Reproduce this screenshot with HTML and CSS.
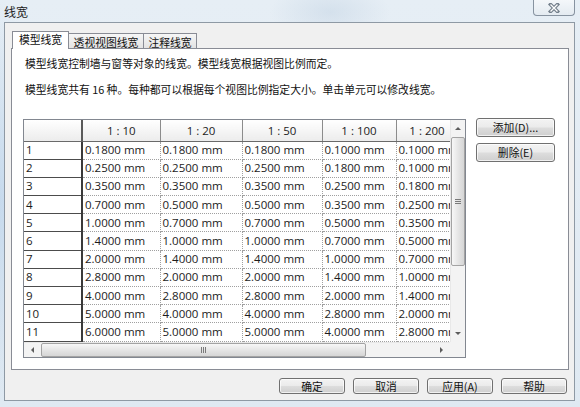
FILE: index.html
```html
<!DOCTYPE html>
<html lang="zh-CN">
<head>
    <meta charset="UTF-8">
    <title>线宽</title>
    <link rel="stylesheet" href="styles.css">
</head>
<body>
<div class="window">
    <div class="titlebar">
        <span class="title">线宽</span>
        <div class="close">
            <svg width="12" height="10" viewBox="0 0 12 10">
                <path d="M2.5 1.5 L9.5 8.5 M9.5 1.5 L2.5 8.5" stroke="#737f8b" stroke-width="3.6" stroke-linecap="square"/>
                <path d="M2.5 1.5 L9.5 8.5 M9.5 1.5 L2.5 8.5" stroke="#fdfdfd" stroke-width="1.3"/>
            </svg>
        </div>
    </div>

    <div class="client">
        <div class="tabs">
            <div class="tab active">模型线宽</div>
            <div class="tab tab-wide">透视视图线宽</div>
            <div class="tab tab-small">注释线宽</div>
        </div>

        <div class="page">
            <p class="note">模型线宽控制墙与窗等对象的线宽。模型线宽根据视图比例而定。</p>
            <p class="note second">模型线宽共有 16 种。每种都可以根据每个视图比例指定大小。单击单元可以修改线宽。</p>

            <div class="grid-row">
                <div class="grid">
                    <div class="grid-main">
                        <div class="viewport">
                            <table class="lw-table">
                                <colgroup>
                                    <col style="width:58px"><col style="width:78px"><col style="width:82px">
                                    <col style="width:80px"><col style="width:74px"><col style="width:62px">
                                </colgroup>
                                <tr><th class="corner-cell"></th><th>1 : 10</th><th>1 : 20</th><th>1 : 50</th><th>1 : 100</th><th>1 : 200</th></tr>
                                <tr><td class="rh">1</td><td>0.1800 mm</td><td>0.1800 mm</td><td>0.1800 mm</td><td>0.1000 mm</td><td>0.1000 mm</td></tr>
                                <tr><td class="rh">2</td><td>0.2500 mm</td><td>0.2500 mm</td><td>0.2500 mm</td><td>0.1800 mm</td><td>0.1000 mm</td></tr>
                                <tr><td class="rh">3</td><td>0.3500 mm</td><td>0.3500 mm</td><td>0.3500 mm</td><td>0.2500 mm</td><td>0.1800 mm</td></tr>
                                <tr><td class="rh">4</td><td>0.7000 mm</td><td>0.5000 mm</td><td>0.5000 mm</td><td>0.3500 mm</td><td>0.2500 mm</td></tr>
                                <tr><td class="rh">5</td><td>1.0000 mm</td><td>0.7000 mm</td><td>0.7000 mm</td><td>0.5000 mm</td><td>0.3500 mm</td></tr>
                                <tr><td class="rh">6</td><td>1.4000 mm</td><td>1.0000 mm</td><td>1.0000 mm</td><td>0.7000 mm</td><td>0.5000 mm</td></tr>
                                <tr><td class="rh">7</td><td>2.0000 mm</td><td>1.4000 mm</td><td>1.4000 mm</td><td>1.0000 mm</td><td>0.7000 mm</td></tr>
                                <tr><td class="rh">8</td><td>2.8000 mm</td><td>2.0000 mm</td><td>2.0000 mm</td><td>1.4000 mm</td><td>1.0000 mm</td></tr>
                                <tr><td class="rh">9</td><td>4.0000 mm</td><td>2.8000 mm</td><td>2.8000 mm</td><td>2.0000 mm</td><td>1.4000 mm</td></tr>
                                <tr><td class="rh">10</td><td>5.0000 mm</td><td>4.0000 mm</td><td>4.0000 mm</td><td>2.8000 mm</td><td>2.0000 mm</td></tr>
                                <tr><td class="rh">11</td><td>6.0000 mm</td><td>5.0000 mm</td><td>5.0000 mm</td><td>4.0000 mm</td><td>2.8000 mm</td></tr>
                                <tr><td class="rh">12</td><td>7.0000 mm</td><td>6.0000 mm</td><td>6.0000 mm</td><td>5.0000 mm</td><td>4.0000 mm</td></tr>
                            </table>
                        </div>
                        <div class="vscroll">
                            <div class="sb-btn"><span class="arrow-up"></span></div>
                            <div class="vthumb"><span class="grip-v"></span></div>
                            <div class="sb-space"></div>
                            <div class="sb-btn"><span class="arrow-down"></span></div>
                        </div>
                    </div>
                    <div class="hscroll-row">
                        <div class="hscroll">
                            <div class="sb-btn h"><span class="arrow-left"></span></div>
                            <div class="hthumb"><span class="grip-h"></span></div>
                            <div class="sb-space"></div>
                            <div class="sb-btn h"><span class="arrow-right"></span></div>
                        </div>
                        <div class="sb-corner"></div>
                    </div>
                </div>

                <div class="side-buttons">
                    <button class="btn side">添加(D)...</button>
                    <button class="btn side">删除(E)</button>
                </div>
            </div>
        </div>

        <div class="footer">
            <button class="btn foot">确定</button>
            <button class="btn foot">取消</button>
            <button class="btn foot">应用(A)</button>
            <button class="btn foot">帮助</button>
        </div>
    </div>
</div>
</body>
</html>
```

FILE: styles.css
```css
* {
    box-sizing: border-box;
}

body {
    margin: 0;
    font-family: "Noto Sans CJK SC", sans-serif;
    font-size: 10.8px;
    color: #111;
}

/* janela com moldura estilo aero */
.window {
    width: 580px;
    height: 407px;
    display: flex;
    flex-direction: column;
    overflow: hidden;
    background:
        radial-gradient(ellipse 60px 30px at 330px 12px, rgba(180, 200, 220, 0.35), transparent),
        radial-gradient(ellipse 40px 200px at 0px 200px, rgba(170, 200, 230, 0.5), transparent),
        linear-gradient(#e6eef5, #dfe9f2);
}

.titlebar {
    height: 22px;
    flex-shrink: 0;
    display: flex;
    justify-content: space-between;
    align-items: flex-start;
}

.title {
    font-size: 12px;
    line-height: 14px;
    padding: 5px 0 0 4px;
    color: #1b1b1b;
}

.close {
    width: 42px;
    height: 16px;
    margin-right: 5px;
    border: 1px solid #8793a0;
    border-top: none;
    border-radius: 0 0 4px 4px;
    background: linear-gradient(#f4f7fa, #e4ebf1);
    display: flex;
    align-items: center;
    justify-content: center;
}

.client {
    flex: 1;
    margin: 0 5px 6px 4px;
    border: 1px solid #8e99a4;
    background: #f0f0f0;
    padding: 8px 5px 0 6px;
    display: flex;
    flex-direction: column;
}

/* abas */
.tabs {
    height: 17px;
    display: flex;
    align-items: flex-end;
    padding-left: 1px;
    position: relative;
    z-index: 1;
}

.tab {
    width: 57px;
    height: 15px;
    border: 1px solid #898c95;
    border-bottom: none;
    background: linear-gradient(#f6f6f6, #e3e3e3);
    text-align: center;
    line-height: 15px;
    padding-top: 1px;
}

.tab + .tab {
    margin-left: -1px;
}

.tab.active {
    height: 18px;
    margin-bottom: -1px;
    background: #fff;
    padding-top: 0;
}

.tab-wide {
    width: 76px;
}

.tab-small {
    width: 54px;
}

.page {
    height: 322px;
    flex-shrink: 0;
    border: 1px solid #898c95;
    background: #fff;
    padding: 6px 0 0 11px;
}

.note {
    margin: 0;
    line-height: 16px;
    padding-left: 2px;
}

.note.second {
    margin-top: 10px;
}

.grid-row {
    display: flex;
    align-items: flex-start;
    margin-top: 22px;
}

/* grade de espessuras */
.grid {
    width: 443px;
    height: 239px;
    border: 1px solid #828790;
    display: flex;
    flex-direction: column;
}

.grid-main {
    height: 222px;
    display: flex;
}

.viewport {
    width: 426px;
    overflow: hidden;
}

.lw-table {
    width: 434px;
    table-layout: fixed;
    border-collapse: collapse;
    font-family: "Open Sans", sans-serif;
    font-size: 11.5px;
    color: #1c1c1c;
}

.lw-table th {
    height: 21px;
    padding: 0;
    font-weight: normal;
    text-align: center;
    background: linear-gradient(#ffffff, #ececec);
    border-right: 1px solid #8c8c8c;
    border-bottom: 1px solid #6a6a6a;
    white-space: nowrap;
}

.lw-table th.corner-cell {
    border-right: 2px solid #5a5a5a;
}

.lw-table td {
    height: 18.2px;
    padding: 0 0 0 2px;
    line-height: 16px;
    border-right: 1px dotted #a0a0a0;
    border-bottom: 1px dotted #a0a0a0;
    white-space: nowrap;
    overflow: hidden;
}

.lw-table td.rh {
    border-right: 2px solid #3a3a3a;
    border-bottom: 1px solid #4c4c4c;
}

/* barras de rolagem */
.vscroll {
    width: 15px;
    display: flex;
    flex-direction: column;
    background: #f3f3f3;
    border-left: 1px solid #e8e8e8;
}

.sb-btn {
    height: 17px;
    flex-shrink: 0;
    display: flex;
    align-items: center;
    justify-content: center;
}

.sb-btn.h {
    width: 17px;
    height: auto;
}

.sb-space {
    flex: 1;
}

.arrow-up,
.arrow-down,
.arrow-left,
.arrow-right {
    width: 0;
    height: 0;
}

.arrow-up {
    border-left: 3px solid transparent;
    border-right: 3px solid transparent;
    border-bottom: 3px solid #5c5c5c;
}

.arrow-down {
    border-left: 3px solid transparent;
    border-right: 3px solid transparent;
    border-top: 3px solid #5c5c5c;
}

.arrow-left {
    border-top: 3px solid transparent;
    border-bottom: 3px solid transparent;
    border-right: 3px solid #5c5c5c;
}

.arrow-right {
    border-top: 3px solid transparent;
    border-bottom: 3px solid transparent;
    border-left: 3px solid #5c5c5c;
}

.vthumb {
    height: 129px;
    flex-shrink: 0;
    border: 1px solid #a3a3a3;
    border-radius: 2px;
    background: linear-gradient(to right, #f7f7f7, #e2e2e2 60%, #d6d6d6);
    display: flex;
    align-items: center;
    justify-content: center;
}

.grip-v {
    width: 6px;
    height: 5px;
    border-top: 1px solid #7a7a7a;
    border-bottom: 1px solid #7a7a7a;
    background: linear-gradient(#7a7a7a, #7a7a7a) center / 100% 1px no-repeat;
}

.hscroll-row {
    height: 15px;
    display: flex;
}

.hscroll {
    flex: 1;
    display: flex;
    background: #f3f3f3;
    border-top: 1px solid #e8e8e8;
}

.hthumb {
    width: 325px;
    flex-shrink: 0;
    border: 1px solid #a3a3a3;
    border-radius: 2px;
    background: linear-gradient(#f7f7f7, #e2e2e2 60%, #d6d6d6);
    display: flex;
    align-items: center;
    justify-content: center;
}

.grip-h {
    width: 5px;
    height: 6px;
    border-left: 1px solid #7a7a7a;
    border-right: 1px solid #7a7a7a;
    background: linear-gradient(#7a7a7a, #7a7a7a) center / 1px 100% no-repeat;
}

.sb-corner {
    width: 15px;
    background: #f3f3f3;
}

/* botões */
.btn {
    font-family: "Noto Sans CJK SC", sans-serif;
    font-size: 10.8px;
    color: #111;
    padding: 0;
    border: 1px solid #707070;
    border-radius: 3px;
    background: linear-gradient(#f3f3f3, #ebebeb 48%, #dddddd 52%, #cfcfcf);
    box-shadow: inset 0 0 0 1px rgba(255, 255, 255, 0.7);
    line-height: 1;
}

.side-buttons {
    display: flex;
    flex-direction: column;
    gap: 6px;
    margin: -1px 0 0 10px;
}

.btn.side {
    width: 79px;
    height: 19px;
}

.footer {
    display: flex;
    justify-content: flex-end;
    gap: 8px;
    margin-top: 8px;
    padding-right: 2px;
}

.btn.foot {
    width: 66px;
    height: 16px;
}
```
